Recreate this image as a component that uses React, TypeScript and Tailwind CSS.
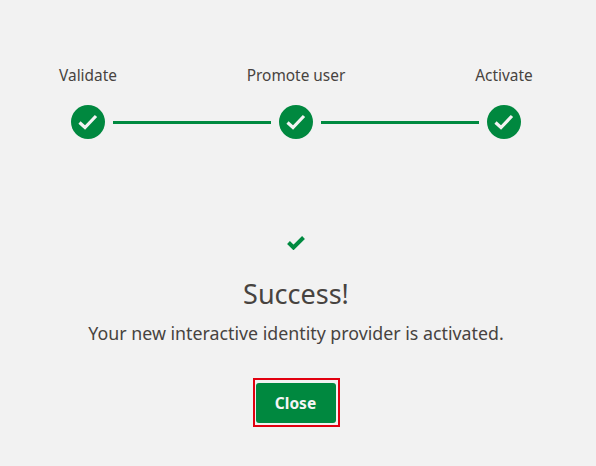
import React from "react";

function Dot() {
  return (
    <div className="w-[34px] h-[34px] rounded-full bg-[#00883f] flex items-center justify-center shrink-0">
      <svg width="20" height="16" viewBox="0 0 20 16" fill="none">
        <path d="M1.5 8.5 L7 13.5 L18 2" stroke="#f3f3f3" strokeWidth="3.2" />
      </svg>
    </div>
  );
}

function Line() {
  return <div className="flex-1 h-[3px] bg-[#008a40]" />;
}

export default function App() {
  return (
    <div className="w-[596px] h-[466px] bg-[#f2f2f2]">
      <div
        className="w-[592px] flex flex-col items-center text-[#474340]"
        style={{ fontFamily: '"Noto Sans", sans-serif' }}
      >
        <div className="w-full px-[28px] pt-[66px] flex justify-between text-[15.4px] leading-[20px]">
          <div className="w-[120px] text-center">Validate</div>
          <div className="w-[120px] text-center">Promote user</div>
          <div className="w-[120px] text-center">Activate</div>
        </div>
        <div className="w-full px-[71px] mt-[19px] flex items-center gap-2">
          <Dot />
          <Line />
          <Dot />
          <Line />
          <Dot />
        </div>
        <svg className="mt-[97px]" width="18" height="14" viewBox="0 0 18 14" fill="none">
          <path d="M1.5 6.5 L6.5 11.5 L16.5 1.5" stroke="#008a40" strokeWidth="4" />
        </svg>
        <div className="mt-[26px] text-[27px] leading-[36px]">Success!</div>
        <div className="mt-[9px] text-[17.8px] leading-[24px]">Your new interactive identity provider is activated.</div>
        <div className="mt-[33px] border-2 border-[#e2000f] pl-[1px] pr-[2px] pt-[3px] pb-[2px] flex">
          <button className="w-[80px] h-[40px] pt-[2px] rounded-[3px] bg-[#00883f] text-[#f5f5f5] text-[15.5px] font-bold">
            Close
          </button>
        </div>
      </div>
    </div>
  );
}
